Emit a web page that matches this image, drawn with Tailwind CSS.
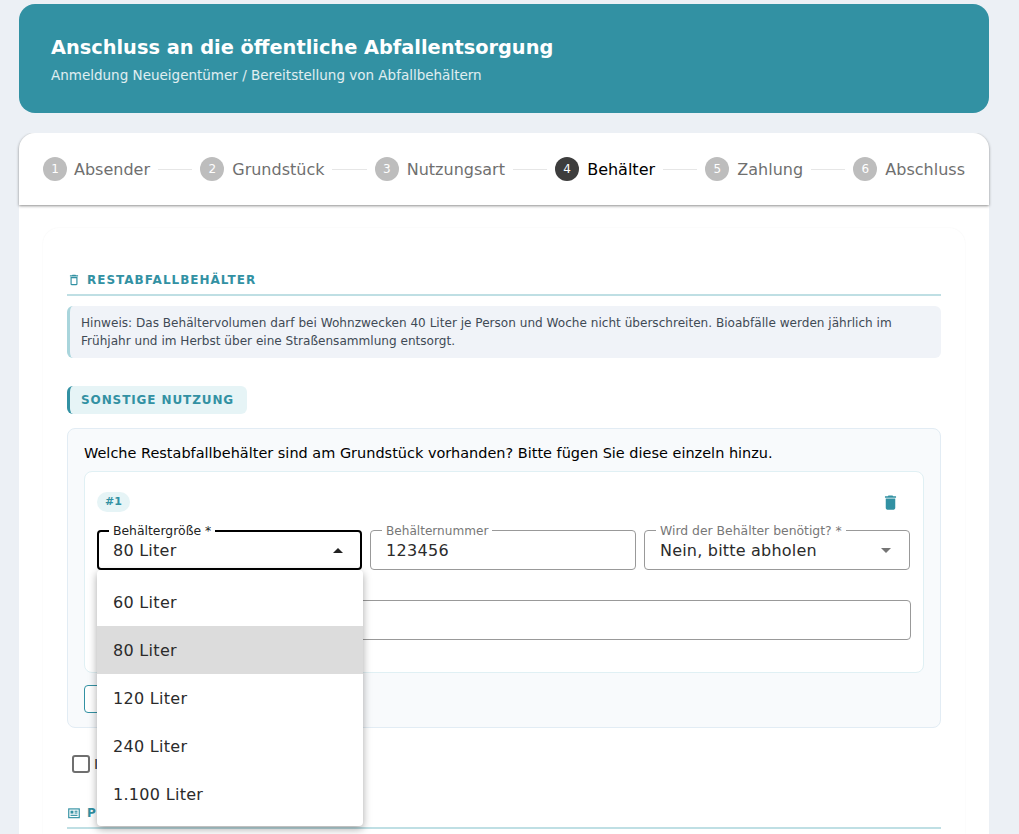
<!DOCTYPE html>
<html lang="de">
<head>
  <meta charset="UTF-8">
  <meta name="viewport" content="width=device-width, initial-scale=1.0">
  <title>Anschluss an die öffentliche Abfallentsorgung</title>
  <script src="https://cdn.jsdelivr.net/npm/@tailwindcss/browser@4"></script>
</head>
<body class="bg-[#ecf0f5] h-[834px] overflow-hidden font-['DejaVu_Sans',sans-serif] text-[#1f1f1f]">
  <div class="w-[970px] ml-[19px] pt-1">

    <!-- header -->
    <header class="h-[109px] bg-[#3291a3] rounded-2xl px-8 flex flex-col justify-center text-white">
      <h1 class="text-[19.35px] leading-[28px] font-bold">Anschluss an die öffentliche Abfallentsorgung</h1>
      <p class="mt-1 text-[13.5px] leading-[18px] text-white/85">Anmeldung Neueigentümer / Bereitstellung von Abfallbehältern</p>
    </header>

    <div class="mt-5 h-[701px] bg-white rounded-t-2xl">
      <!-- stepper -->
      <nav class="h-[72px] px-6 flex items-center rounded-t-2xl bg-white shadow-[0_1px_3px_rgba(0,0,0,0.45)] [clip-path:inset(0_-4px_-6px_-4px)] relative">
        <div class="flex items-center gap-[7px] text-[#6f6f6f] text-[16px]">
          <span class="w-6 h-6 rounded-full bg-[#bdbdbd] text-white text-[12px] flex items-center justify-center">1</span><span class="mt-[2px]">Absender</span>
        </div>
        <div class="flex-1 h-px bg-[#e6e6e6] mx-2"></div>
        <div class="flex items-center gap-2 text-[#6f6f6f] text-[16px]">
          <span class="w-6 h-6 rounded-full bg-[#bdbdbd] text-white text-[12px] flex items-center justify-center">2</span><span class="mt-[2px]">Grundstück</span>
        </div>
        <div class="flex-1 h-px bg-[#e6e6e6] mx-2"></div>
        <div class="flex items-center gap-2 text-[#6f6f6f] text-[16px]">
          <span class="w-6 h-6 rounded-full bg-[#bdbdbd] text-white text-[12px] flex items-center justify-center">3</span><span class="mt-[2px]">Nutzungsart</span>
        </div>
        <div class="flex-1 h-px bg-[#e6e6e6] mx-2"></div>
        <div class="flex items-center gap-2 text-black text-[16px]">
          <span class="w-6 h-6 rounded-full bg-[#3d3d3d] text-white text-[12px] flex items-center justify-center">4</span><span class="mt-[2px]">Behälter</span>
        </div>
        <div class="flex-1 h-px bg-[#e6e6e6] mx-2"></div>
        <div class="flex items-center gap-2 text-[#6f6f6f] text-[16px]">
          <span class="w-6 h-6 rounded-full bg-[#bdbdbd] text-white text-[12px] flex items-center justify-center">5</span><span class="mt-[2px]">Zahlung</span>
        </div>
        <div class="flex-1 h-px bg-[#e6e6e6] mx-2"></div>
        <div class="flex items-center gap-2 text-[#6f6f6f] text-[16px]">
          <span class="w-6 h-6 rounded-full bg-[#bdbdbd] text-white text-[12px] flex items-center justify-center">6</span><span class="mt-[2px]">Abschluss</span>
        </div>
      </nav>

      <!-- form panel -->
      <main class="mx-6 mt-[23px] px-6 pt-[43px] h-[606px] rounded-t-2xl shadow-[0_0_2px_rgba(0,0,0,0.05)] bg-white">
        <h2 class="h-[25px] flex items-center gap-[6px] text-[12px] font-bold tracking-[1px] uppercase text-[#3291a3] border-b-2 border-[#bfdfe4] pb-[5px]">
          <svg class="w-[14px] h-[14px]" viewBox="0 0 24 24" fill="currentColor"><path d="M16 9v10H8V9h8m-1.5-6h-5l-1 1H5v2h14V4h-3.5l-1-1zM18 7H6v12c0 1.1.9 2 2 2h8c1.1 0 2-.9 2-2V7z"/></svg>
          Restabfallbehälter
        </h2>

        <p class="mt-[10px] h-[52px] bg-[#f0f3f8] border-l-[3px] border-[#a9d5dc] rounded-md pl-[11px] pr-2 py-2 text-[12.08px] leading-[18px] text-[#3f4a55]">
          Hinweis: Das Behältervolumen darf bei Wohnzwecken 40 Liter je Person und Woche nicht überschreiten. Bioabfälle werden jährlich im Frühjahr und im Herbst über eine Straßensammlung entsorgt.
        </p>

        <div class="mt-7 w-[180px] h-7 flex items-center bg-[#e6f4f6] border-l-[3px] border-[#3291a3] rounded-md pl-[11px] text-[12px] font-bold tracking-[0.9px] uppercase text-[#3291a3]">Sonstige Nutzung</div>

        <section class="mt-[14px] h-[300px] bg-[#f8fafc] border border-[#e2ecf4] rounded-lg px-4 pt-[15px]">
          <p class="text-[14.48px] leading-[18px] text-black">Welche Restabfallbehälter sind am Grundstück vorhanden? Bitte fügen Sie diese einzeln hinzu.</p>

          <div class="mt-[9px] h-[202px] bg-white border border-[#e0f0f4] rounded-lg pl-3 pr-[12px] pt-5">
            <div class="flex items-center justify-between h-5">
              <span class="w-[33px] h-5 rounded-full bg-[#e6f4f6] text-[#3291a3] text-[11px] font-bold flex items-center justify-center">#1</span>
              <svg class="w-[19px] h-[19px] mr-[11px] text-[#3291a3]" viewBox="0 0 24 24" fill="currentColor"><path d="M6 19c0 1.1.9 2 2 2h8c1.1 0 2-.9 2-2V7H6v12zM19 4h-3.5l-1-1h-5l-1 1H5v2h14V4z"/></svg>
            </div>

            <div class="mt-[18px] flex gap-2">
              <!-- focused select -->
              <div class="relative w-[265px] h-10 border-2 border-black rounded flex items-center justify-between pl-[14px] pr-[17px] text-[16px] tracking-[0.25px] text-[#2b2b2b]">
                <span class="absolute left-[10px] -top-[9px] bg-white px-[4px] text-[12.4px] leading-[16px] tracking-normal text-[#222]">Behältergröße *</span>
                <span class="mt-[2px]">80 Liter</span>
                <span class="w-0 h-0 border-x-[5px] border-x-transparent border-b-[5px] border-b-[#222]"></span>
              </div>
              <div class="relative w-[266px] h-10 border border-[#999] rounded flex items-center pl-[15px] text-[16px] tracking-[0.3px] text-[#2b2b2b]">
                <span class="absolute left-[11px] -top-[8px] bg-white px-[4px] text-[12.1px] leading-[16px] tracking-normal text-[#777]">Behälternummer</span>
                <span class="mt-[2px]">123456</span>
              </div>
              <div class="relative w-[266px] h-10 border border-[#999] rounded flex items-center justify-between pl-[15px] pr-[18px] text-[16px] tracking-[0.2px] text-[#2b2b2b]">
                <span class="absolute left-[11px] -top-[8px] bg-white px-[4px] text-[12.4px] leading-[16px] tracking-normal text-[#777]">Wird der Behälter benötigt? *</span>
                <span class="mt-[2px]">Nein, bitte abholen</span>
                <span class="w-0 h-0 border-x-[5px] border-x-transparent border-t-[5px] border-t-[#757575]"></span>
              </div>
            </div>

            <div class="mt-[30px] w-[814px] h-10 border border-[#999] rounded"></div>
          </div>

          <button class="mt-3 w-[60px] h-7 border border-[#3291a3] rounded bg-white pl-[11px] text-left text-[14px] leading-[24px] text-[#d9925a]">+</button>
        </section>

        <label class="mt-[26px] ml-[5px] flex items-center gap-[4px] h-[20px] text-[14px] text-[#333]">
          <span class="w-[18px] h-[18px] border-2 border-[#6f6f6f] rounded-[3px]"></span>I
        </label>

        <h2 class="mt-[30px] h-[25px] flex items-center gap-[6px] text-[12px] font-bold tracking-[1px] uppercase text-[#3291a3] border-b-2 border-[#bfdfe4] pb-[5px]">
          <svg class="w-[14px] h-[14px]" viewBox="0 0 24 24" fill="currentColor"><rect x="3" y="5" width="18" height="15" fill="none" stroke="currentColor" stroke-width="2"/><rect x="6" y="8" width="5" height="5"/><rect x="13" y="8" width="5" height="2"/><rect x="13" y="11" width="5" height="2"/><rect x="6" y="15" width="12" height="2"/></svg>
          P
        </h2>
      </main>
    </div>
  </div>

  <!-- open dropdown -->
  <ul class="absolute left-[97px] top-[570px] w-[266px] h-[256px] bg-white rounded py-2 shadow-[0_3px_8px_rgba(0,0,0,0.35)] text-[16px] tracking-[0.3px] text-[#2b2b2b]">
    <li class="h-12 flex items-center px-4 pt-[2px]">60 Liter</li>
    <li class="h-12 flex items-center px-4 pt-[2px] bg-[#dcdcdc]">80 Liter</li>
    <li class="h-12 flex items-center px-4 pt-[2px]">120 Liter</li>
    <li class="h-12 flex items-center px-4 pt-[2px]">240 Liter</li>
    <li class="h-12 flex items-center px-4 pt-[2px]">1.100 Liter</li>
  </ul>
</body>
</html>
